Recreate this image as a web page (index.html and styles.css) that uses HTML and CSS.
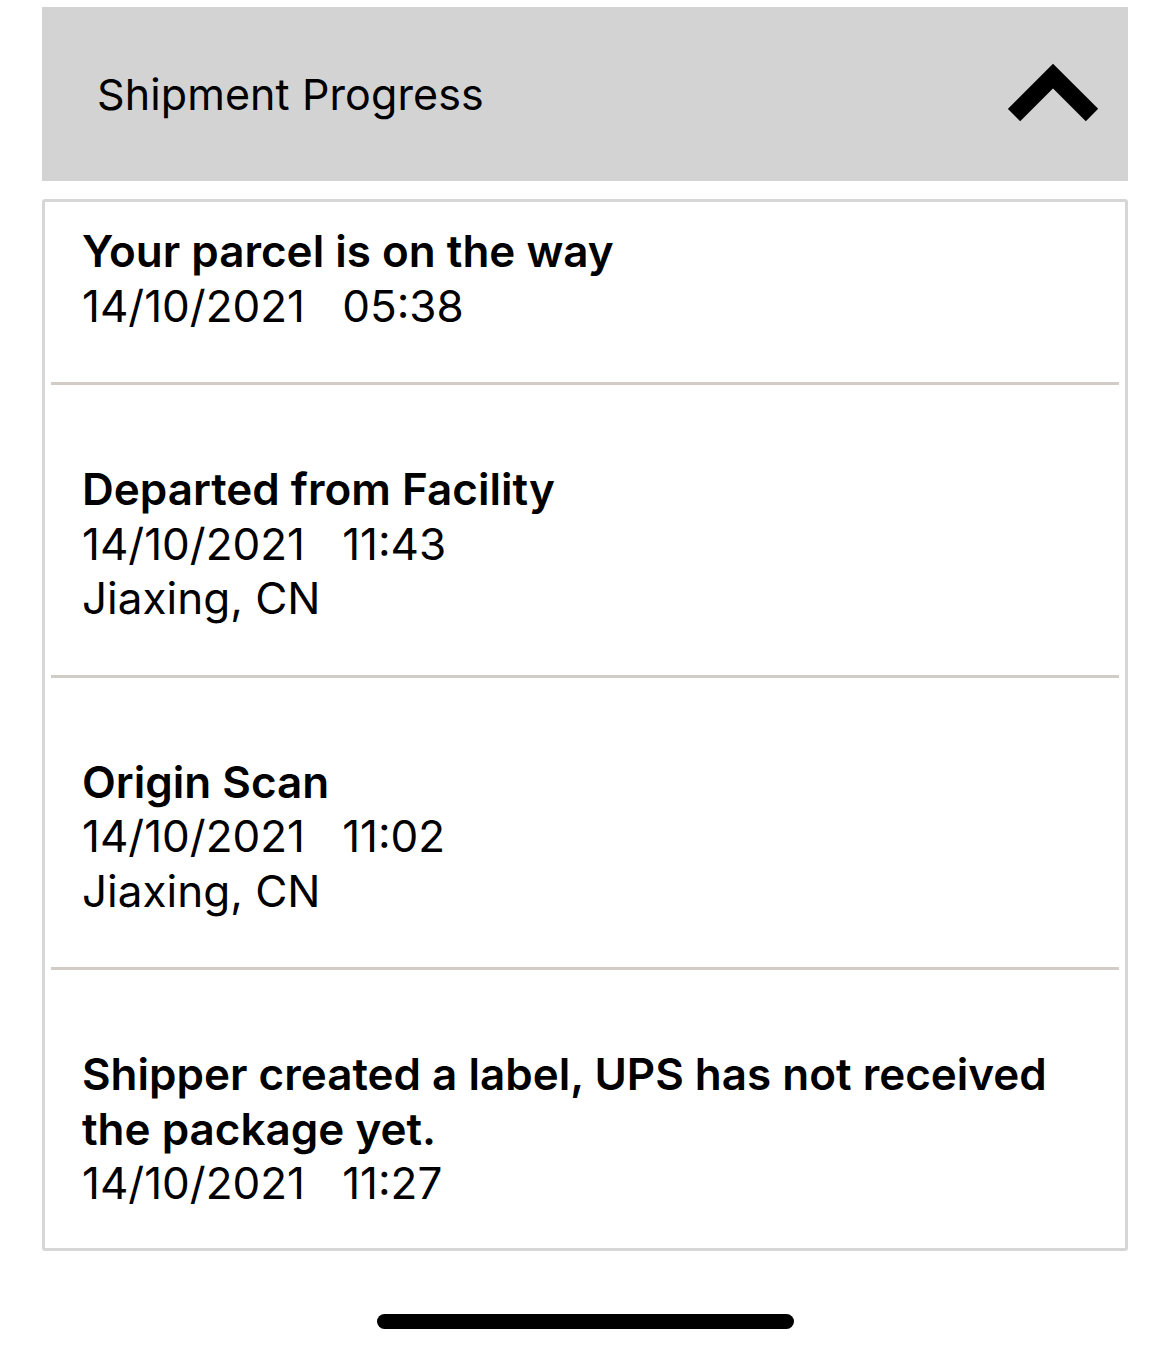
FILE: index.html
```html
<!DOCTYPE html>
<html lang="en">
<head>
<meta charset="utf-8">
<title>Shipment Progress</title>
<link rel="stylesheet" href="styles.css">
</head>
<body>
<div class="page">
  <div class="header">
    <span class="header-title">Shipment Progress</span>
    <svg class="chevron" width="100" height="70" viewBox="0 0 100 70" aria-hidden="true">
      <polyline points="6,55 45,16 84,55" fill="none" stroke="#000" stroke-width="17.5" stroke-linecap="butt" stroke-linejoin="miter"/>
    </svg>
  </div>
  <div class="card">
    <div class="event first">
      <div class="ev-title">Your parcel is on the way</div>
      <div class="ev-line">14/10/2021&nbsp;&nbsp;&nbsp;05:38</div>
    </div>
    <div class="divider"></div>
    <div class="event">
      <div class="ev-title">Departed from Facility</div>
      <div class="ev-line">14/10/2021&nbsp;&nbsp;&nbsp;11:43</div>
      <div class="ev-line">Jiaxing, CN</div>
    </div>
    <div class="divider"></div>
    <div class="event">
      <div class="ev-title">Origin Scan</div>
      <div class="ev-line">14/10/2021&nbsp;&nbsp;&nbsp;11:02</div>
      <div class="ev-line">Jiaxing, CN</div>
    </div>
    <div class="divider"></div>
    <div class="event last">
      <div class="ev-title">Shipper created a label, UPS has not received the package yet.</div>
      <div class="ev-line">14/10/2021&nbsp;&nbsp;&nbsp;11:27</div>
    </div>
  </div>
  <div class="home-bar-wrap"><div class="home-bar"></div></div>
</div>
</body>
</html>
```

FILE: styles.css
```css
* { box-sizing: border-box; }
html, body {
  margin: 0;
  padding: 0;
  background: #fff;
}
body {
  font-family: Inter, "Noto Sans", "Liberation Sans", sans-serif;
  color: #000;
}
.page {
  width: 1170px;
  height: 1353px;
  padding: 7px 42px 0 42px;
  display: flex;
  flex-direction: column;
}
.header {
  height: 174px;
  background: #d3d3d3;
  display: flex;
  align-items: center;
  justify-content: space-between;
  padding: 0 20px 0 55px;
}
.header-title {
  font-size: 43px;
  font-weight: 400;
  letter-spacing: 0.1px;
}
.chevron {
  display: block;
  margin-top: 2px;
}
.card {
  margin-top: 18px;
  border: 3px solid #d6d6d6;
  border-radius: 3px;
  display: flex;
  flex-direction: column;
}
.event {
  padding: 77px 40px 49px 37px;
  line-height: 54.5px;
  font-size: 44px;
}
.event.first { padding-top: 22px; }
.event.last { padding-bottom: 37px; }
.ev-title {
  font-weight: 600;
}
.ev-line {
  font-weight: 400;
}
.divider {
  height: 3px;
  background: #d1ccc6;
  margin: 0 6px;
}
.home-bar-wrap {
  display: flex;
  justify-content: center;
  margin-top: 63px;
}
.home-bar {
  width: 417px;
  height: 15px;
  border-radius: 8px;
  background: #000;
}
```
